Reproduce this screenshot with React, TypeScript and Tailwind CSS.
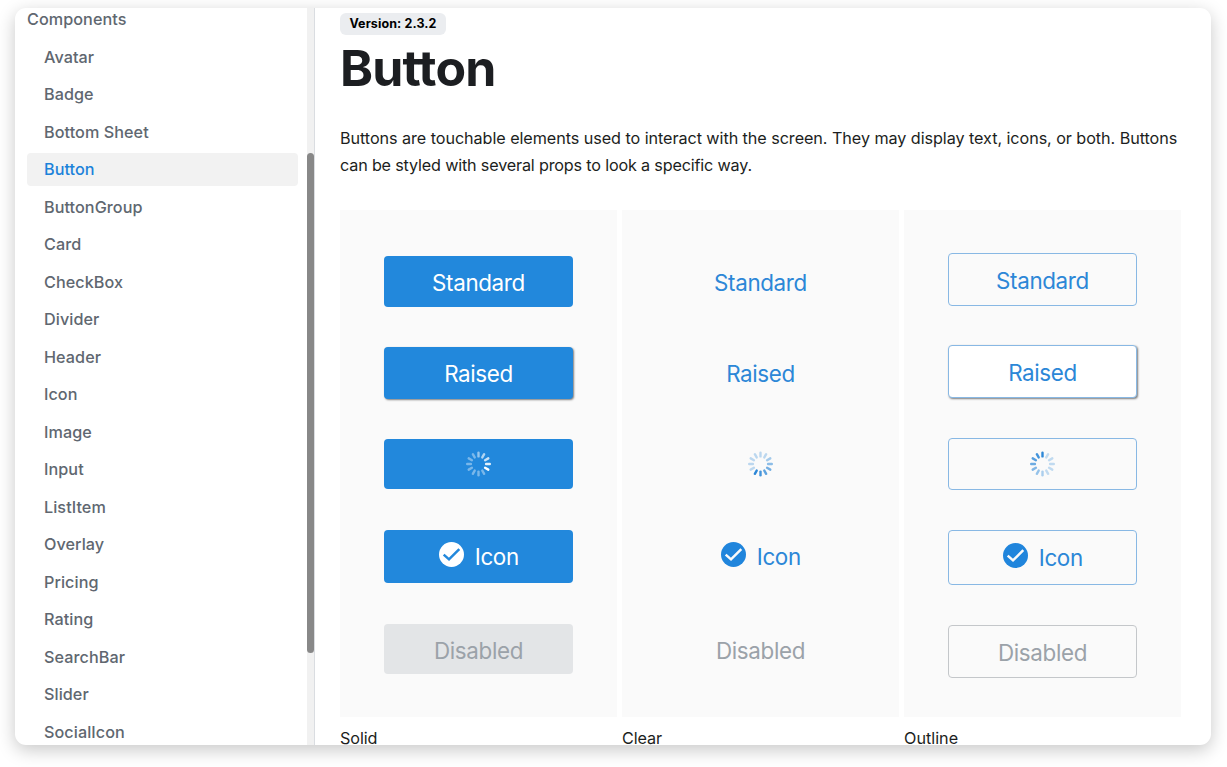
const items: string[] = [
  "Avatar", "Badge", "Bottom Sheet", "Button", "ButtonGroup", "Card", "CheckBox", "Divider", "Header", "Icon",
  "Image", "Input", "ListItem", "Overlay", "Pricing", "Rating", "SearchBar", "Slider", "SocialIcon",
];

function Spinner({ head, rest, trail }: { head: number; rest: number; trail: number }) {
  return (
    <svg width="26" height="26" viewBox="-12.5 -13 26 26" fill="none" stroke="currentColor" strokeWidth="2.4" strokeLinecap="round">
      {Array.from({ length: 12 }, (_, i) => {
        const behind = (head - i + 12) % 12;
        const opacity = behind < trail ? 1 - (behind / trail) * (1 - rest) : rest;
        return <line key={i} x1="0" y1="-7.6" x2="0" y2="-11.3" transform={`rotate(${i * 30})`} opacity={opacity} />;
      })}
    </svg>
  );
}

function CheckCircle({ mark }: { mark: string }) {
  return (
    <svg width="25" height="25" viewBox="0 0 25 25" className="block shrink-0">
      <circle cx="12.5" cy="12.5" r="12.5" fill="currentColor" />
      <path d="M4.7 12.6 10 17.4 20.3 7.2" fill="none" stroke={mark} strokeWidth="2.5" />
    </svg>
  );
}

function IconLabel({ mark }: { mark: string }) {
  return (
    <span className="flex items-center gap-[10.5px] pl-px">
      <span className="-mt-[3px] text-[#2085dc] in-[.text-white]:text-white"><CheckCircle mark={mark} /></span>
      <span className="pt-px">Icon</span>
    </span>
  );
}

const cell = "flex w-full items-center justify-center rounded-[4px] leading-none";

function Solid() {
  return (
    <div className="flex h-[507px] flex-col bg-[#fafafa] px-[44px] pt-[46px] text-white">
      <div className={`${cell} h-[51px] bg-[#2288dc] pt-[3px]`}>Standard</div>
      <div className={`${cell} mt-[40.4px] h-[51.2px] bg-[#2288dc] pt-[2px] shadow-[1px_1px_2px_rgba(0,0,0,0.5)]`}>Raised</div>
      <div className={`${cell} mt-[40.4px] h-[50px] bg-[#2288dc]`}><Spinner head={4} rest={0.4} trail={5} /></div>
      <div className={`${cell} mt-[41px] h-[53px] bg-[#2288dc]`}><IconLabel mark="#2288dc" /></div>
      <div className={`${cell} mt-[41px] h-[50px] bg-[#e3e5e7] pt-[4px] text-[#9ba2a9]`}>Disabled</div>
    </div>
  );
}

function Clear() {
  return (
    <div className="flex h-[507px] flex-col bg-[#fafafa] px-[44px] pt-[46px] text-[#2c87d7]">
      <div className={`${cell} h-[51px] pt-[3px]`}>Standard</div>
      <div className={`${cell} mt-[40.4px] h-[51px] pt-[2px]`}>Raised</div>
      <div className={`${cell} mt-[40.6px] h-[50px]`}><Spinner head={7} rest={0.3} trail={6} /></div>
      <div className={`${cell} mt-[41px] h-[53px]`}><IconLabel mark="#fafafa" /></div>
      <div className={`${cell} mt-[41px] h-[50px] pt-[4px] text-[#9ba2a9]`}>Disabled</div>
    </div>
  );
}

function Outline() {
  return (
    <div className="flex h-[507px] flex-col bg-[#fafafa] px-[44px] pt-[43px] text-[#2c87d7]">
      <div className={`${cell} h-[53px] border border-[#88b8e4] pt-[3px]`}>Standard</div>
      <div className={`${cell} mt-[39.4px] h-[53px] border border-[#88b8e4] bg-white pt-[2px] shadow-[1px_1px_2px_rgba(0,0,0,0.5)]`}>Raised</div>
      <div className={`${cell} mt-[39.6px] h-[52px] border border-[#88b8e4]`}><Spinner head={12} rest={0.28} trail={7} /></div>
      <div className={`${cell} mt-[40px] h-[55px] border border-[#88b8e4]`}><IconLabel mark="#fafafa" /></div>
      <div className={`${cell} mt-[40px] h-[53px] border border-[#c4c7ca] pt-[3px] text-[#9ba2a9]`}>Disabled</div>
    </div>
  );
}

export default function App() {
  return (
    <div className="h-[767px] w-[1227px] overflow-hidden bg-white pl-[15px] pt-2 font-['Inter','Liberation_Sans',sans-serif] pr-4">
      <div className="flex h-[737px] overflow-hidden rounded-[11px] bg-white shadow-[0_5px_18px_rgba(0,0,0,0.22)]">
        <aside className="flex h-full w-[300px] shrink-0 border-r border-[#dadde1]">
          <nav className="flex w-[292px] flex-col gap-[4.5px] pr-[9px] pl-3 text-[16.2px] font-medium leading-none tracking-[0.06px] text-[#606770]">
            <div className="-mt-[5.5px] flex h-[33px] shrink-0 items-center pt-px">Components</div>
            {items.map((item) => (
              <a
                key={item}
                className={`flex h-[33px] shrink-0 items-center rounded-[4px] pt-px pl-[17px] ${item === "Button" ? "bg-[#f2f2f2] text-[#1c82da]" : ""}`}
              >
                {item}
              </a>
            ))}
          </nav>
          <div className="w-[7px] bg-[#f1f1f1] pt-[145px]">
            <div className="h-[500px] w-[7px] rounded-[4px] bg-[#888]" />
          </div>
        </aside>
        <main className="w-[896px] pl-[25px] text-[#1c1e21]">
          <div className="mt-[5px] flex h-[22px] w-[106px] items-center justify-center rounded-[6px] bg-[#ebedf0] pt-px text-[12.5px] font-bold tracking-[0.1px] text-black">
            Version: 2.3.2
          </div>
          <h1 className="mt-[8px] flex h-[50px] items-center text-[50px] font-bold leading-none tracking-[-0.8px]">Button</h1>
          <p className="mt-[32px] text-[16.2px] leading-[27px] whitespace-nowrap">
            <span className="tracking-[-0.067px]">
              Buttons are touchable elements used to interact with the screen. They may display text, icons, or both. Buttons
            </span>
            <br />
            <span className="tracking-[-0.18px]">can be styled with several props to look a specific way.</span>
          </p>
          <div className="mt-[31px] grid w-[841px] grid-cols-3 gap-[5px] text-[22.4px] tracking-[-0.36px]">
            <Solid />
            <Clear />
            <Outline />
          </div>
          <div className="mt-[8px] grid w-[841px] grid-cols-3 gap-[5px] text-[16.2px] leading-[27px]">
            <span className="tracking-[-0.1px]">Solid</span>
            <span className="tracking-[-0.1px]">Clear</span>
            <span>Outline</span>
          </div>
        </main>
      </div>
    </div>
  );
}
